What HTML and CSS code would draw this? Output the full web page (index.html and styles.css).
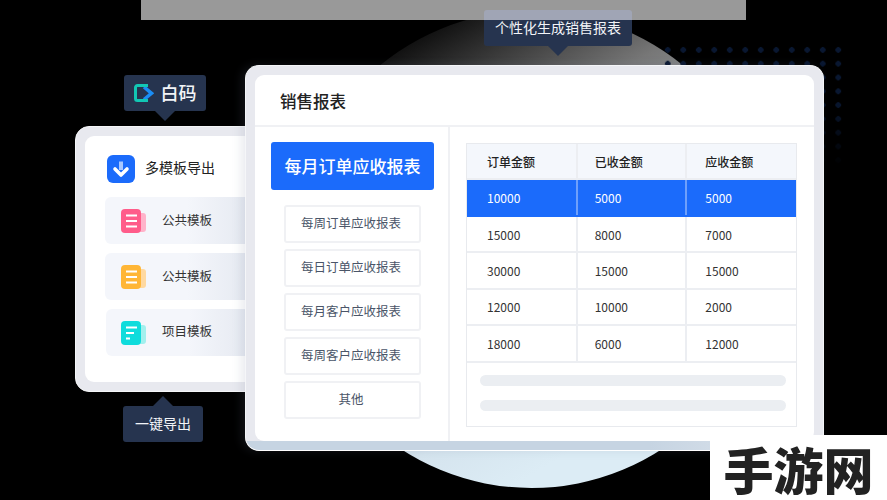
FILE: index.html
```html
<!DOCTYPE html>
<html lang="zh-CN">
<head>
    <meta charset="UTF-8">
    <meta name="viewport" content="width=device-width, initial-scale=1.0">
    <title>销售报表</title>
    <link rel="stylesheet" href="styles.css">
</head>
<body>
    <div class="stage">
        <div class="top-bar"></div>
        <div class="circle"></div>
        <div class="dots"></div>

        <div class="tip tip-brand">
            <svg class="brand-logo" viewBox="0 0 20 18" width="20" height="18">
                <path d="M10 3L17.500 9.300L10 15.500" fill="none" stroke="#1b8df5" stroke-width="3.500"/>
                <path d="M14 1.500H3.500A2 2 0 0 0 1.500 3.500V14.500A2 2 0 0 0 3.500 16.500H14" fill="none" stroke="#12c7b4" stroke-width="3"/>
            </svg>
            <span class="brand-name">白码</span>
        </div>

        <section class="card export">
            <div class="card-inner export-inner">
                <div class="export-head">
                    <svg class="export-icon" viewBox="0 0 28 28" width="28" height="28">
                        <rect width="28" height="28" rx="6" fill="#1b6bfb"/>
                        <path d="M14 6.500V15" stroke="#a9c8ff" stroke-width="4"/>
                        <path d="M8 14L14 20L20 14" fill="none" stroke="#fff" stroke-width="3.600" stroke-linecap="round" stroke-linejoin="round"/>
                    </svg>
                    <span class="export-title">多模板导出</span>
                </div>
                <div class="template">
                    <svg viewBox="0 0 25 24" width="25" height="24">
                        <rect x="12" y="4" width="13" height="19" rx="3" fill="#ffb3ca"/>
                        <rect width="20" height="24" rx="4" fill="#ff5c8a"/>
                        <path d="M5 6.500H16M5 12H16M5 17.500H16" stroke="#fff" stroke-width="2"/>
                    </svg>
                    <span class="template-name">公共模板</span>
                </div>
                <div class="template">
                    <svg viewBox="0 0 25 24" width="25" height="24">
                        <rect x="12" y="4" width="13" height="19" rx="3" fill="#ffd9a0"/>
                        <rect width="20" height="24" rx="4" fill="#ffb636"/>
                        <path d="M5 6.500H16M5 12H16M5 17.500H16" stroke="#fff" stroke-width="2"/>
                    </svg>
                    <span class="template-name">公共模板</span>
                </div>
                <div class="template template-last">
                    <svg viewBox="0 0 25 24" width="25" height="24">
                        <rect x="12" y="4" width="13" height="19" rx="3" fill="#a2f0ee"/>
                        <rect width="20" height="24" rx="4" fill="#0fdcdc"/>
                        <path d="M5 6.500H16M5 12H13M5 17.500H9" stroke="#fff" stroke-width="2"/>
                    </svg>
                    <span class="template-name">项目模板</span>
                </div>
            </div>
        </section>

        <div class="tip tip-export">一键导出</div>

        <section class="card report">
            <div class="card-inner report-inner">
                <h1 class="report-title">销售报表</h1>
                <div class="report-body">
                    <nav class="report-nav">
                        <a class="nav-main">每月订单应收报表</a>
                        <a class="nav-item">每周订单应收报表</a>
                        <a class="nav-item">每日订单应收报表</a>
                        <a class="nav-item">每月客户应收报表</a>
                        <a class="nav-item">每周客户应收报表</a>
                        <a class="nav-item">其他</a>
                    </nav>
                    <div class="report-data">
                        <div class="table-box">
                            <table>
                                <thead>
                                    <tr><th>订单金额</th><th>已收金额</th><th>应收金额</th></tr>
                                </thead>
                                <tbody>
                                    <tr class="active"><td>10000</td><td>5000</td><td>5000</td></tr>
                                    <tr><td>15000</td><td>8000</td><td>7000</td></tr>
                                    <tr><td>30000</td><td>15000</td><td>15000</td></tr>
                                    <tr><td>12000</td><td>10000</td><td>2000</td></tr>
                                    <tr><td>18000</td><td>6000</td><td>12000</td></tr>
                                </tbody>
                            </table>
                            <div class="placeholders">
                                <div class="placeholder"></div>
                                <div class="placeholder"></div>
                            </div>
                        </div>
                    </div>
                </div>
            </div>
        </section>

        <div class="tip tip-report">个性化生成销售报表</div>
        <div class="watermark">手游网</div>
    </div>
</body>
</html>
```

FILE: styles.css
```css
* {
    box-sizing: border-box;
}
body {
    margin: 0;
    background: black;
    font-family: "Noto Sans CJK SC", "Noto Sans", sans-serif;
    color: #333;
}
.stage {
    position: relative;
    width: 887px;
    height: 500px;
    overflow: hidden;
    background: black;
}

/* backdrop */
.top-bar {
    position: absolute;
    left: 141px;
    top: 0;
    width: 605px;
    height: 20px;
    background: #999;
    z-index: 1;
}
.circle {
    position: absolute;
    left: 293px;
    top: 11px;
    width: 477px;
    height: 477px;
    border-radius: 50%;
    background: linear-gradient(150deg, #000 10%, #333 20%, #777 33%, #d5e4ee 69%, #dcecf5 80%);
}
.dots {
    position: absolute;
    left: 660px;
    top: 43px;
    width: 186px;
    height: 125px;
    background: radial-gradient(circle, #091731 2.500px, transparent 3px);
    background-size: 15.500px 13.800px;
    -webkit-mask-image: linear-gradient(#000 45%, transparent);
    mask-image: linear-gradient(#000 45%, transparent);
}
.watermark {
    position: absolute;
    left: 710px;
    top: 435px;
    width: 177px;
    height: 65px;
    z-index: 4;
    display: flex;
    justify-content: center;
    align-items: center;
    background: white;
    color: #222;
    font-size: 50px;
    font-weight: 900;
    line-height: 1;
}

/* tooltips */
.tip {
    position: absolute;
    display: flex;
    align-items: center;
    justify-content: center;
    height: 36px;
    padding-bottom: 2px;
    background: #26344f;
    border-radius: 3px;
    color: #f2f4f8;
    font-size: 14px;
}
.tip::after {
    content: "";
    position: absolute;
    left: 50%;
    margin-left: -10px;
    border: 10px solid transparent;
    border-bottom-width: 0;
    border-top-color: #26344f;
    top: 100%;
}
.tip-brand {
    left: 124px;
    top: 75px;
    width: 82px;
    gap: 7px;
    z-index: 1;
}
.brand-logo {
    margin-top: 2px;
}
.brand-name {
    font-size: 18px;
    font-weight: 500;
}
.tip-export {
    left: 123px;
    top: 406px;
    width: 80px;
}
.tip-export::after {
    top: auto;
    bottom: 100%;
    border: 10px solid transparent;
    border-top-width: 0;
    border-bottom-color: #26344f;
}
.tip-report {
    left: 484px;
    top: 10px;
    width: 148px;
    background: linear-gradient(#a0a5b5 10px, #26344f 10px);
    z-index: 3;
}

/* cards */
.card {
    position: absolute;
    padding: 9px;
    border: 1px solid #f5f6f8;
    border-radius: 14px;
    background: #e8e9ef;
}
.card-inner {
    height: 100%;
    background: white;
    border-radius: 9px;
}
.export {
    left: 75px;
    top: 126px;
    width: 190px;
    height: 266px;
    z-index: 1;
}
.export-inner {
    padding: 19px 0 0 20px;
    overflow: hidden;
}
.export-head {
    display: flex;
    align-items: center;
    gap: 10px;
    margin: 0 0 14px 2px;
    font-size: 14px;
    color: #222;
}
.export-title {
    padding-bottom: 4px;
}
.template {
    display: flex;
    align-items: center;
    gap: 16px;
    width: 150px;
    height: 47px;
    margin-bottom: 9px;
    padding-left: 16px;
    border-radius: 6px;
    background: linear-gradient(90deg, #f4f6fb 55%, #e4e8f0);
    font-size: 12.500px;
    color: #333;
}
.template-name {
    padding-bottom: 2px;
}
.template-last {
    margin-left: 1px;
    padding-left: 15px;
}
.template-last .template-name {
    padding-bottom: 4px;
}

.report {
    left: 245px;
    top: 65px;
    width: 579px;
    height: 386px;
    z-index: 2;
    border-bottom-color: white;
    background:
        linear-gradient(90deg, #c6d4e2 70%, #e3e8ef) bottom / 100% 9px no-repeat,
        #e8e9ef;
    box-shadow: -4px 0 10px rgba(110, 120, 150, 0.15);
}
.report-inner {
    display: flex;
    flex-direction: column;
}
.report-title {
    margin: 0;
    height: 52px;
    padding: 0 25px;
    border-bottom: 2px solid #f0f1f4;
    font-size: 16.500px;
    font-weight: 500;
    line-height: 52px;
    color: #222;
}
.report-body {
    flex: 1;
    display: flex;
}
.report-nav {
    width: 195px;
    padding: 15px 14px 0 16px;
    border-right: 2px solid #f0f1f4;
    display: flex;
    flex-direction: column;
    align-items: center;
}
.nav-main {
    width: 163px;
    height: 48px;
    margin-bottom: 15px;
    border-radius: 3px;
    background: #1b6bfb;
    color: white;
    font-size: 17px;
    font-weight: 500;
    line-height: 48px;
    text-align: center;
}
.nav-item {
    width: 137px;
    height: 38px;
    margin-bottom: 6px;
    padding-right: 3px;
    border: 2px solid #f0f1f4;
    border-radius: 3px;
    color: #4a5568;
    font-size: 12.500px;
    line-height: 32px;
    text-align: center;
}
.report-data {
    flex: 1;
    padding: 16px 16px 0 16px;
}
.table-box {
    width: 331px;
    height: 284px;
    border: 1px solid #e8eaee;
}
table {
    width: 100%;
    border-collapse: collapse;
    table-layout: fixed;
}
th, td {
    height: 36.400px;
    padding: 0 0 0 18px;
    border: 2px solid #eceef2;
    font-size: 12px;
    font-weight: 400;
    text-align: left;
    color: #333;
}
tr > :first-child {
    padding-left: 20px;
    border-left: none;
}
tr > :nth-child(2) {
    padding-left: 17px;
}
tr > :last-child {
    border-right: none;
}
th {
    height: 35px;
    background: #f4f7fc;
    font-weight: 500;
    color: #222;
}
thead th {
    border-top: none;
}
.active td {
    height: 37px;
    background: #1b6bfb;
    color: white;
    border-color: #1b6bfb;
    border-left-color: #6ea0fb;
    border-right-color: #6ea0fb;
}
.active td:first-child {
    border-left: none;
}
.active td:last-child {
    border-right: none;
}
.placeholders {
    display: flex;
    flex-direction: column;
    gap: 14px;
    padding: 12px 10px 0 13px;
}
.placeholder {
    height: 11px;
    border-radius: 6px;
    background: #ebeef2;
}
```
